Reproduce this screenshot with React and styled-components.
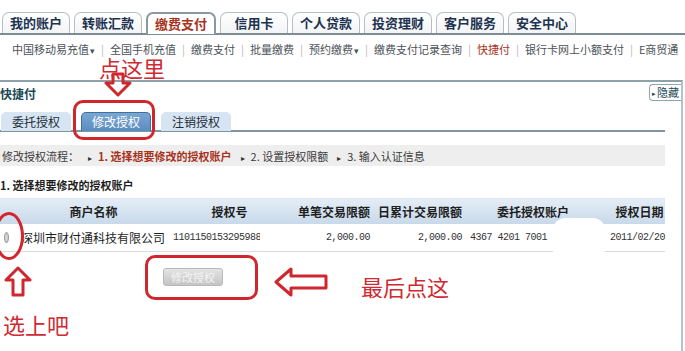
import React from 'react';
import styled, { createGlobalStyle } from 'styled-components';

const GlobalStyle = createGlobalStyle`
  body {
    margin: 0;
    background: #fff;
    font-family: "Noto Sans CJK SC", "Noto Sans", sans-serif;
  }
`;

const topTabs = ['我的账户', '转账汇款', '缴费支付', '信用卡', '个人贷款', '投资理财', '客户服务', '安全中心'];
const subLinks = [
  { text: '中国移动易充值', drop: true },
  { text: '全国手机充值' },
  { text: '缴费支付' },
  { text: '批量缴费' },
  { text: '预约缴费', drop: true },
  { text: '缴费支付记录查询' },
  { text: '快捷付', current: true },
  { text: '银行卡网上小额支付' },
  { text: 'E商贸通' },
];
const columns = '165px 125px 80px 92px 138px 65px';

function App() {
  return (
    <>
      <GlobalStyle />
      <Page>
        <TopTabs>
          {topTabs.map((t, i) => (
            <TopTab key={t} $active={i === 2}>{t}</TopTab>
          ))}
        </TopTabs>
        <SubNav>
          {subLinks.map((l, i) => (
            <React.Fragment key={l.text}>
              {i > 0 && <Sep>|</Sep>}
              <SubLink $current={l.current}>
                {l.text}{l.drop && <Caret>▾</Caret>}
              </SubLink>
            </React.Fragment>
          ))}
        </SubNav>

        <Panel>
          <PanelHead>
            <PanelTitle>快捷付</PanelTitle>
            <HideBtn><small>▸</small>隐藏</HideBtn>
          </PanelHead>
          <AuthTabs>
            <AuthTab>委托授权</AuthTab>
            <AuthTab $active>修改授权</AuthTab>
            <AuthTab>注销授权</AuthTab>
          </AuthTabs>
          <Steps>
            <span>修改授权流程：</span>
            <Step $current><Tri>▸</Tri>1. 选择想要修改的授权账户</Step>
            <Step><Tri>▸</Tri>2. 设置授权限额</Step>
            <Step><Tri>▸</Tri>3. 输入认证信息</Step>
          </Steps>
          <SectionTitle>1. 选择想要修改的授权账户</SectionTitle>
          <Table>
            <HeadRow>
              <HeadCell $pad="0 0 0 22px">商户名称</HeadCell>
              <HeadCell $pad="0 0 0 4px">授权号</HeadCell>
              <HeadCell $align="right">单笔交易限额</HeadCell>
              <HeadCell $align="right">日累计交易限额</HeadCell>
              <HeadCell $pad="0 0 0 4px">委托授权账户</HeadCell>
              <HeadCell $pad="0 0 0 14px">授权日期</HeadCell>
            </HeadRow>
            <BodyRow>
              <NameCell><Radio />深圳市财付通科技有限公司</NameCell>
              <NumCell $clip>1101150153295988</NumCell>
              <NumCell $align="right">2,000.00</NumCell>
              <NumCell $align="right">2,000.00</NumCell>
              <NumCell $pad="0 0 0 8px">4367 4201 7001</NumCell>
              <NumCell $align="right">2011/02/20</NumCell>
            </BodyRow>
          </Table>
          <ButtonRow>
            <GrayButton disabled>修改授权</GrayButton>
          </ButtonRow>
        </Panel>

        <Redact />
        <Note $x={99} $y={52}>点这里</Note>
        <Note $x={3} $y={309}>选上吧</Note>
        <Note $x={361} $y={271}>最后点这</Note>
        <Ring $x={73} $y={100} $w={82} $h={40} $r="10px" />
        <Ring $x={-6} $y={212} $w={30} $h={48} $r="50%" />
        <Ring $x={145} $y={255} $w={113} $h={45} $r="10px" />
        <ArrowSvg style={{ left: 104, top: 72 }} width="28" height="25" viewBox="0 0 28 25">
          <path d="M9 2 H19 V11 H26 L14 23 L2 11 H9 Z" fill="none" stroke="#d0262e" strokeWidth="3" strokeLinejoin="round" />
        </ArrowSvg>
        <ArrowSvg style={{ left: 4, top: 266 }} width="28" height="31" viewBox="0 0 28 31">
          <path d="M14 2 L26 14 H19 V29 H9 V14 H2 Z" fill="none" stroke="#d0262e" strokeWidth="3" strokeLinejoin="round" />
        </ArrowSvg>
        <ArrowSvg style={{ left: 274, top: 267 }} width="54" height="30" viewBox="0 0 54 30">
          <path d="M2 15 L17 2 V9 H52 V21 H17 V28 Z" fill="none" stroke="#d0262e" strokeWidth="3" strokeLinejoin="round" />
        </ArrowSvg>
      </Page>
    </>
  );
}

const Page = styled.div`
  position: relative;
  width: 685px;
  height: 351px;
  overflow: hidden;
  background: #fff;
`;

const TopTabs = styled.div`
  display: flex;
  gap: 4px;
  padding: 12px 0 0 2px;
  border-bottom: 2px solid #7d8c96;
  height: 21px;
`;

const TopTab = styled.div`
  width: 66px;
  height: 20px;
  border: 1px solid #b7bec4;
  border-bottom: none;
  border-radius: 7px 7px 0 0;
  background: ${p => (p.$active ? '#fff' : 'linear-gradient(#ffffff, #f2f4f5)')};
  color: ${p => (p.$active ? '#a8331c' : '#1d3350')};
  font-size: 13px;
  font-weight: bold;
  line-height: 20px;
  text-align: center;
  ${p => p.$active && 'border-color: #8d979e; border-width: 2px 2px 0;'}
`;

const SubNav = styled.div`
  display: flex;
  align-items: center;
  height: 28px;
  padding-left: 12px;
  font-size: 11px;
  color: #5a5a5a;
  white-space: nowrap;
`;

const SubLink = styled.span`
  color: ${p => (p.$current ? '#a8331c' : '#4c5258')};
`;

const Caret = styled.span`
  font-size: 9px;
  margin-left: 1px;
`;

const Sep = styled.span`
  color: #b8b8b8;
  margin: 0 6px;
`;

const Panel = styled.div`
  margin-top: 17px;
  width: 681px;
  height: 275px;
  border-top: 2px solid #8ea2ac;
  border-right: 2px solid #b5c2c9;
`;

const PanelHead = styled.div`
  display: flex;
  justify-content: space-between;
  align-items: flex-start;
  height: 30px;
`;

const PanelTitle = styled.div`
  font-size: 12px;
  font-weight: bold;
  color: #1b4a55;
  padding-top: 3px;
`;

const HideBtn = styled.div`
  margin-top: 2px;
  width: 31px;
  height: 15px;
  border: 1px solid #8fa6b2;
  border-right: none;
  border-radius: 4px 0 0 4px;
  font-size: 11px;
  line-height: 15px;
  color: #1b4a55;
  small {
    font-size: 7px;
    margin: 0 1px 0 2px;
    vertical-align: 1px;
  }
`;

const AuthTabs = styled.div`
  display: flex;
  gap: 10px;
  padding-left: 7px;
  width: 658px;
  height: 18px;
  border-bottom: 2px solid #7f95a3;
`;

const AuthTab = styled.div`
  width: 68px;
  height: 18px;
  border-radius: 5px 5px 0 0;
  background: ${p => (p.$active ? 'linear-gradient(#7aa6d2, #5b8dc0)' : '#d7e5f2')};
  border: 1px solid ${p => (p.$active ? '#3f6f9f' : '#d7e5f2')};
  border-bottom: none;
  color: ${p => (p.$active ? '#fff' : '#1d2d3a')};
  font-size: 12px;
  line-height: 18px;
  text-align: center;
  &:first-child {
    margin-left: -6px;
  }
`;

const Steps = styled.div`
  display: flex;
  align-items: center;
  gap: 9px;
  margin-top: 13px;
  width: 663px;
  height: 21px;
  padding-left: 2px;
  background: #eeeeee;
  font-size: 11px;
  color: #3a3a3a;
  white-space: nowrap;
`;

const Step = styled.span`
  color: ${p => (p.$current ? '#a8331c' : '#3a3a3a')};
  font-weight: ${p => (p.$current ? 'bold' : 'normal')};
`;

const Tri = styled.span`
  font-size: 8px;
  color: #333;
  margin-right: 6px;
  font-weight: normal;
`;

const SectionTitle = styled.div`
  margin-top: 11px;
  font-size: 11px;
  font-weight: bold;
  color: #1e1e1e;
  height: 16px;
`;

const Table = styled.div`
  width: 665px;
  margin-top: 5px;
`;

const HeadRow = styled.div`
  display: grid;
  grid-template-columns: ${columns};
  height: 25px;
  align-items: center;
  background: linear-gradient(#e4edf6, #c8d9ea);
  border-top: 1px solid #dfe8f0;
`;

const HeadCell = styled.div`
  text-align: ${p => p.$align || 'center'};
  padding: ${p => p.$pad || '0'};
  font-size: 12px;
  line-height: 16px;
  font-weight: bold;
  color: #1e1e1e;
  white-space: nowrap;
`;

const BodyRow = styled.div`
  display: grid;
  grid-template-columns: ${columns};
  height: 27px;
  align-items: center;
  border-bottom: 1px solid #dcdcdc;
`;

const NameCell = styled.div`
  display: flex;
  align-items: center;
  font-size: 12px;
  line-height: 16px;
  color: #1e1e1e;
  white-space: nowrap;
`;

const Radio = styled.span`
  width: 9px;
  height: 9px;
  margin: 0 12px 0 4px;
  border-radius: 50%;
  border: 1px solid #9a9a9a;
  background: radial-gradient(#dedede, #bdbdbd);
`;

const NumCell = styled.div`
  font-family: "Liberation Mono", monospace;
  font-size: 10px;
  line-height: 14px;
  letter-spacing: -0.5px;
  color: #333;
  text-align: ${p => p.$align || 'left'};
  padding: ${p => p.$pad || '0'};
  white-space: nowrap;
  ${p => p.$clip && 'padding-left: 8px; width: 87px; overflow: hidden;'}
`;

const ButtonRow = styled.div`
  display: flex;
  padding-left: 163px;
  margin-top: 16px;
`;

const GrayButton = styled.button`
  width: 60px;
  height: 18px;
  padding: 0;
  border: 1px solid #b9b9b9;
  border-radius: 3px;
  background: linear-gradient(#e4e4e4, #c4c4c4);
  color: #f4f4f4;
  font-family: "Noto Sans CJK SC", sans-serif;
  font-size: 11px;
`;

const Redact = styled.div`
  position: absolute;
  left: 553px;
  top: 218px;
  width: 52px;
  height: 52px;
  background: #fff;
  border-radius: 12px;
`;

const Note = styled.div`
  position: absolute;
  left: ${p => p.$x}px;
  top: ${p => p.$y}px;
  font-size: 22px;
  line-height: 30px;
  color: #cf2a32;
  white-space: nowrap;
`;

const Ring = styled.div`
  position: absolute;
  left: ${p => p.$x}px;
  top: ${p => p.$y}px;
  width: ${p => p.$w}px;
  height: ${p => p.$h}px;
  border: 3px solid #d0262e;
  border-radius: ${p => p.$r};
  box-sizing: border-box;
`;

const ArrowSvg = styled.svg`
  position: absolute;
`;

export default App;
